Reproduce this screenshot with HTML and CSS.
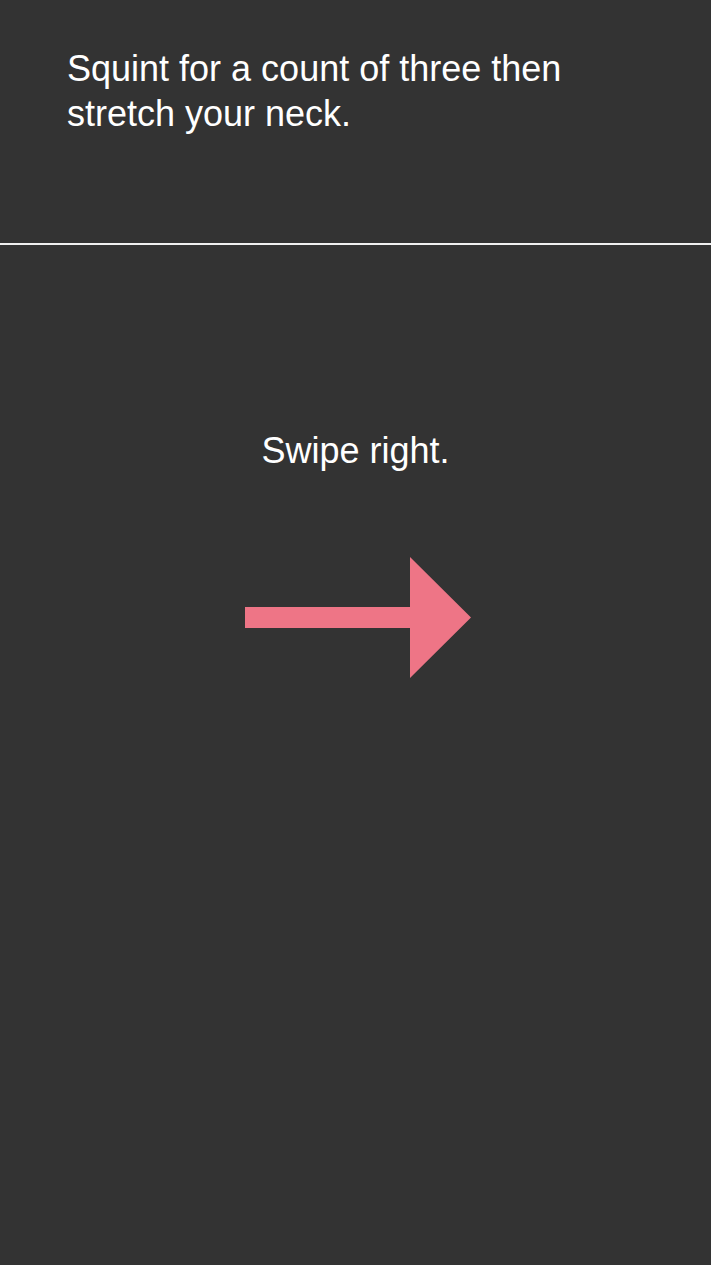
FILE: index.html
```html
<!DOCTYPE html>
<html>
<head>
<meta charset="utf-8">
<link rel="stylesheet" href="styles.css">
</head>
<body>
<div class="screen">
  <header class="prompt">
    <p class="prompt-text">Squint for a count of three then<br>stretch your neck.</p>
  </header>
  <main class="swipe">
    <p class="swipe-text">Swipe right.</p>
    <svg class="arrow" width="226" height="121" viewBox="0 0 226 121">
      <polygon points="0,50 165,50 165,0 226,60.5 165,121 165,71 0,71" fill="#ee7586"/>
    </svg>
  </main>
</div>
</body>
</html>
```

FILE: styles.css
```css
html, body {
  margin: 0;
  padding: 0;
  background: #333333;
}
.screen {
  width: 711px;
  height: 1265px;
  background: #333333;
  font-family: "Liberation Sans", Arial, Helvetica, sans-serif;
  color: #ffffff;
  display: flex;
  flex-direction: column;
}
.prompt {
  box-sizing: border-box;
  height: 245px;
  padding: 46px 67px 0;
  border-bottom: 2px solid #f0f0f0;
}
.prompt-text {
  margin: 0;
  font-size: 36px;
  line-height: 45px;
}
.swipe {
  display: flex;
  flex-direction: column;
  align-items: center;
  padding-top: 185px;
}
.swipe-text {
  margin: 0;
  font-size: 36px;
  line-height: 41px;
}
.arrow {
  display: block;
  margin-top: 86px;
  margin-left: 4px;
}
```
